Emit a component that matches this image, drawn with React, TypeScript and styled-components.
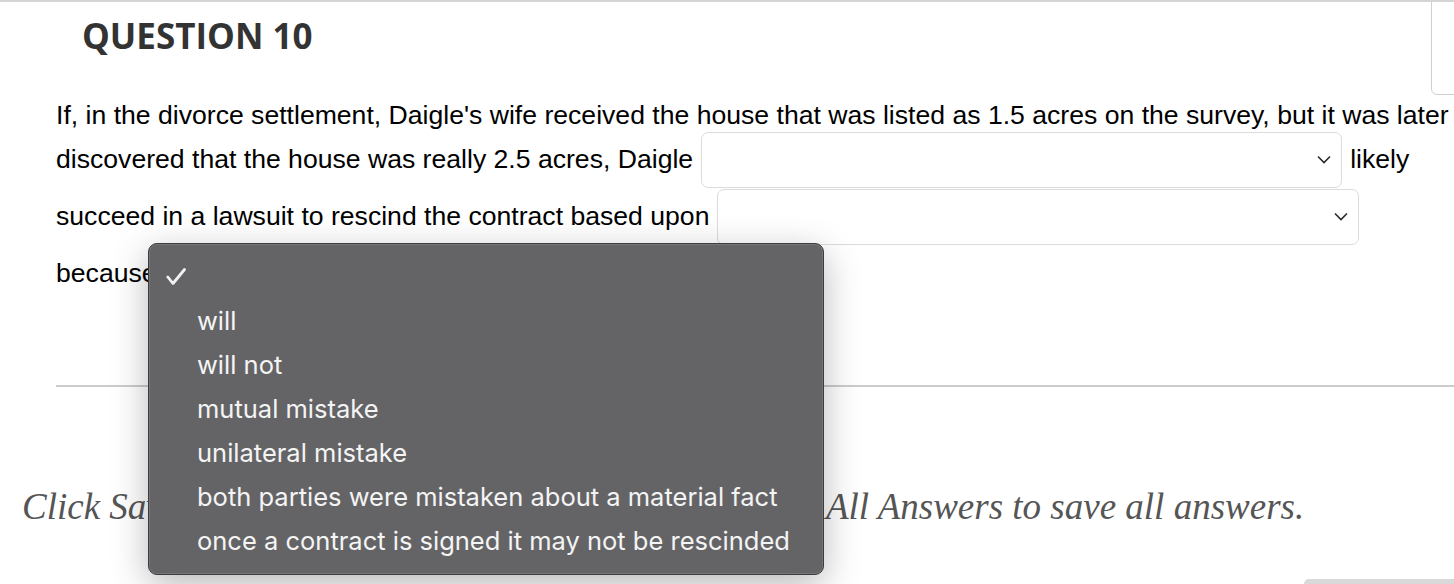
import React from 'react';
import styled, { createGlobalStyle } from 'styled-components';

const GlobalStyle = createGlobalStyle`
  html, body {
    margin: 0;
    padding: 0;
    background: #fff;
    overflow: hidden;
  }
  body {
    font-family: 'Liberation Sans', Arial, sans-serif;
  }
`;

const menuOptions = [
  '',
  'will',
  'will not',
  'mutual mistake',
  'unilateral mistake',
  'both parties were mistaken about a material fact',
  'once a contract is signed it may not be rescinded'
];

function Chevron() {
  return (
    <svg width='14' height='9' viewBox='0 0 14 9' fill='none'>
      <path d='M1 1.5l6 6 6-6' stroke='#2a2a2a' strokeWidth='1.6' />
    </svg>
  );
}

function Select({ width }: { width: number }) {
  return (
    <SelectBox $width={width}>
      <Chevron />
    </SelectBox>
  );
}

function App() {
  return (
    <Page>
      <GlobalStyle />
      <Header>
        <Title>QUESTION 10</Title>
        <PointsBox />
      </Header>
      <Question>
        <Line $tall={false}>
          If, in the divorce settlement, Daigle's wife received the house that
          was listed as 1.5 acres on the survey, but it was later
        </Line>
        <Line $tall>
          discovered that the house was really 2.5 acres, Daigle
          <Select width={641} />
          likely
        </Line>
        <Line $tall>
          succeed in a lawsuit to rescind the contract based upon
          <Select width={642} />
        </Line>
        <Line $tall>
          because
          <Select width={640} />
        </Line>
      </Question>
      <Divider />
      <Instructions>
        Click Save and Submit to save and submit. Click Save All Answers to
        save all answers.
      </Instructions>
      <ButtonRow>
        <GreyButton />
      </ButtonRow>
      <Menu>
        {menuOptions.map((opt, i) => (
          <MenuItem key={i}>
            <CheckSlot>
              {i === 0 && (
                <svg width='20' height='17' viewBox='0 0 20 17' fill='none'>
                  <path
                    d='M1.8 9l5.2 6.5L18.5 1.5'
                    stroke='#f2f2f2'
                    strokeWidth='2.8'
                    strokeLinecap='round'
                    strokeLinejoin='round'
                  />
                </svg>
              )}
            </CheckSlot>
            {opt}
          </MenuItem>
        ))}
      </Menu>
    </Page>
  );
}

export default App;

const Page = styled.div`
  position: relative;
  width: 1454px;
  height: 584px;
  overflow: hidden;
  border-top: 2px solid #d4d4d4;
  box-sizing: border-box;
`;

const Header = styled.div`
  display: flex;
  justify-content: space-between;
  align-items: flex-start;
  height: 97px;
`;

const Title = styled.h1`
  margin: 13px 0 0 82px;
  font-family: 'Open Sans', sans-serif;
  font-weight: 700;
  font-size: 35px;
  line-height: 1.2;
  color: #333;
`;

const PointsBox = styled.div`
  width: 60px;
  height: 95px;
  margin-top: -2px;
  margin-right: -37px;
  border: 1px solid #cfcfcf;
  border-radius: 0 0 0 6px;
  box-sizing: border-box;
`;

const Question = styled.div`
  padding-left: 56px;
  font-size: 26.6px;
  color: #000;
`;

const Line = styled.div<{ $tall: boolean }>`
  display: flex;
  align-items: center;
  gap: 8px;
  white-space: nowrap;
  height: ${(p) => (p.$tall ? '57px' : '32px')};
`;

const SelectBox = styled.div<{ $width: number }>`
  width: ${(p) => p.$width}px;
  height: 56px;
  border: 1px solid #dcdcdc;
  border-radius: 7px;
  box-sizing: border-box;
  display: flex;
  align-items: center;
  justify-content: flex-end;
  padding-right: 10px;
`;

const Divider = styled.div`
  margin: 83px 0 0 56px;
  height: 2px;
  background: #cccccc;
`;

const Instructions = styled.p`
  margin: 98px 0 0 22px;
  font-family: 'Liberation Serif', 'Times New Roman', serif;
  font-style: italic;
  font-size: 37px;
  color: #555;
  white-space: nowrap;
`;

const ButtonRow = styled.div`
  display: flex;
  justify-content: flex-end;
  margin-top: 51px;
`;

const GreyButton = styled.div`
  width: 180px;
  height: 40px;
  margin-right: -30px;
  background: #d9d9d9;
  border-radius: 5px 0 0 0;
`;

const Menu = styled.div`
  position: absolute;
  left: 148px;
  top: 241px;
  width: 676px;
  padding: 10px 0 12px;
  box-sizing: border-box;
  background: #646467;
  border: 1px solid #3c3c3e;
  border-radius: 9px;
  box-shadow: inset 0 0 0 1px rgba(255, 255, 255, 0.12),
    0 10px 36px rgba(0, 0, 0, 0.28);
`;

const MenuItem = styled.div`
  display: flex;
  align-items: center;
  height: 44px;
  font-family: Inter, 'Noto Sans', sans-serif;
  font-size: 25.5px;
  color: #f4f4f4;
  white-space: nowrap;
`;

const CheckSlot = styled.span`
  width: 48px;
  padding-left: 17px;
  box-sizing: border-box;
  display: flex;
  align-items: center;
`;
